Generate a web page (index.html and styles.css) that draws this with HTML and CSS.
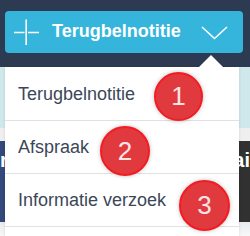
FILE: index.html
```html
<!DOCTYPE html>
<html lang="nl">
<head>
<meta charset="utf-8">
<title>Terugbelnotitie</title>
<link rel="stylesheet" href="styles.css">
</head>
<body>
<div class="page">
  <header class="header">
    <button class="btn" type="button">
      <svg class="plus" width="27" height="27" viewBox="0 0 27 27" aria-hidden="true">
        <path d="M1 13.5H11.5M15 13.5H26M13.2 0.5V26" stroke="#fff" stroke-width="1.6" fill="none"/>
      </svg>
      <span class="btn-label">Terugbelnotitie</span>
      <svg class="chev" width="28" height="14" viewBox="0 0 28 14" aria-hidden="true">
        <path d="M1 1L13.5 12.5L26 1" stroke="#fff" stroke-width="1.6" fill="none"/>
      </svg>
    </button>
  </header>
  <div class="band band-cyan"></div>
  <div class="band band-gray"></div>
  <div class="band band-dark">
    <div class="dark-left">r</div>
    <div class="dark-right">ai</div>
  </div>
  <div class="band band-light"></div>
</div>

<ul class="menu">
  <li class="menu-item">Terugbelnotitie</li>
  <li class="menu-item">Afspraak</li>
  <li class="menu-item">Informatie verzoek</li>
</ul>

<span class="badge badge-1">1</span>
<span class="badge badge-2">2</span>
<span class="badge badge-3">3</span>
</body>
</html>
```
FILE: styles.css
```css
* { box-sizing: border-box; }
html, body {
  margin: 0;
  padding: 0;
}
body {
  width: 250px;
  height: 236px;
  overflow: hidden;
  position: relative;
  font-family: "Liberation Sans", Arial, sans-serif;
  background: #f7f7f7;
}
.page {
  display: flex;
  flex-direction: column;
  height: 236px;
}
.header {
  background: #2c3a52;
  padding: 11px 7px 14px 5px;
}
.btn {
  display: flex;
  align-items: center;
  width: 100%;
  height: 42px;
  border: 0;
  border-radius: 4px;
  background: #36b5dc;
  color: #fff;
  font-family: "Liberation Sans", Arial, sans-serif;
  font-weight: 700;
  font-size: 18px;
  padding: 0;
  margin: 0;
}
.plus {
  margin-left: 8px;
  flex: none;
}
.btn-label {
  margin-left: 12px;
  line-height: 20px;
  margin-top: -2px;
}
.chev {
  flex: none;
  margin-left: auto;
  margin-right: 14px;
  margin-top: 2px;
}
.band { flex: none; }
.band-cyan { height: 61px; background: #cfe8eb; }
.band-gray { height: 13px; background: #efefef; }
.band-dark {
  height: 81px;
  display: grid;
  grid-template-columns: 1fr 1fr;
  color: #fff;
  font-weight: 700;
  font-size: 20px;
}
.dark-left {
  background: #33497a;
  padding-top: 8px;
  padding-left: 0;
}
.dark-right {
  background: #313131;
  padding-top: 8px;
  text-align: right;
  padding-right: 0;
}
.band-light {
  flex: 1;
  background: linear-gradient(#e9ebee, #f8f8f8);
}
.menu {
  position: absolute;
  top: 67px;
  bottom: 0;
  left: 5px;
  width: 234px;
  margin: 0;
  padding: 1px 0 0;
  list-style: none;
  background: #fff;
  box-shadow: 0 1px 3px rgba(0,0,0,0.12);
}
.menu::before {
  content: "";
  position: absolute;
  top: -12px;
  left: 194px;
  border-left: 12px solid transparent;
  border-right: 12px solid transparent;
  border-bottom: 12px solid #fff;
}
.menu-item {
  height: 53px;
  display: flex;
  align-items: center;
  padding-left: 13px;
  border-bottom: 1px solid #e1e1e1;
  font-size: 18px;
  color: #3b4759;
}
.badge {
  position: absolute;
  width: 49px;
  height: 49px;
  border-radius: 50%;
  background: #e03a3f;
  border: 2px solid #f31c22;
  color: #fde4e4;
  font-size: 26px;
  display: flex;
  align-items: center;
  justify-content: center;
  box-shadow: 0 0 4px rgba(0,0,0,0.25);
}
.badge-1 { left: 154px; top: 72px; }
.badge-2 { left: 100px; top: 126px; width: 50px; height: 50px; }
.badge-3 { left: 179px; top: 180px; width: 51px; height: 51px; }
```
